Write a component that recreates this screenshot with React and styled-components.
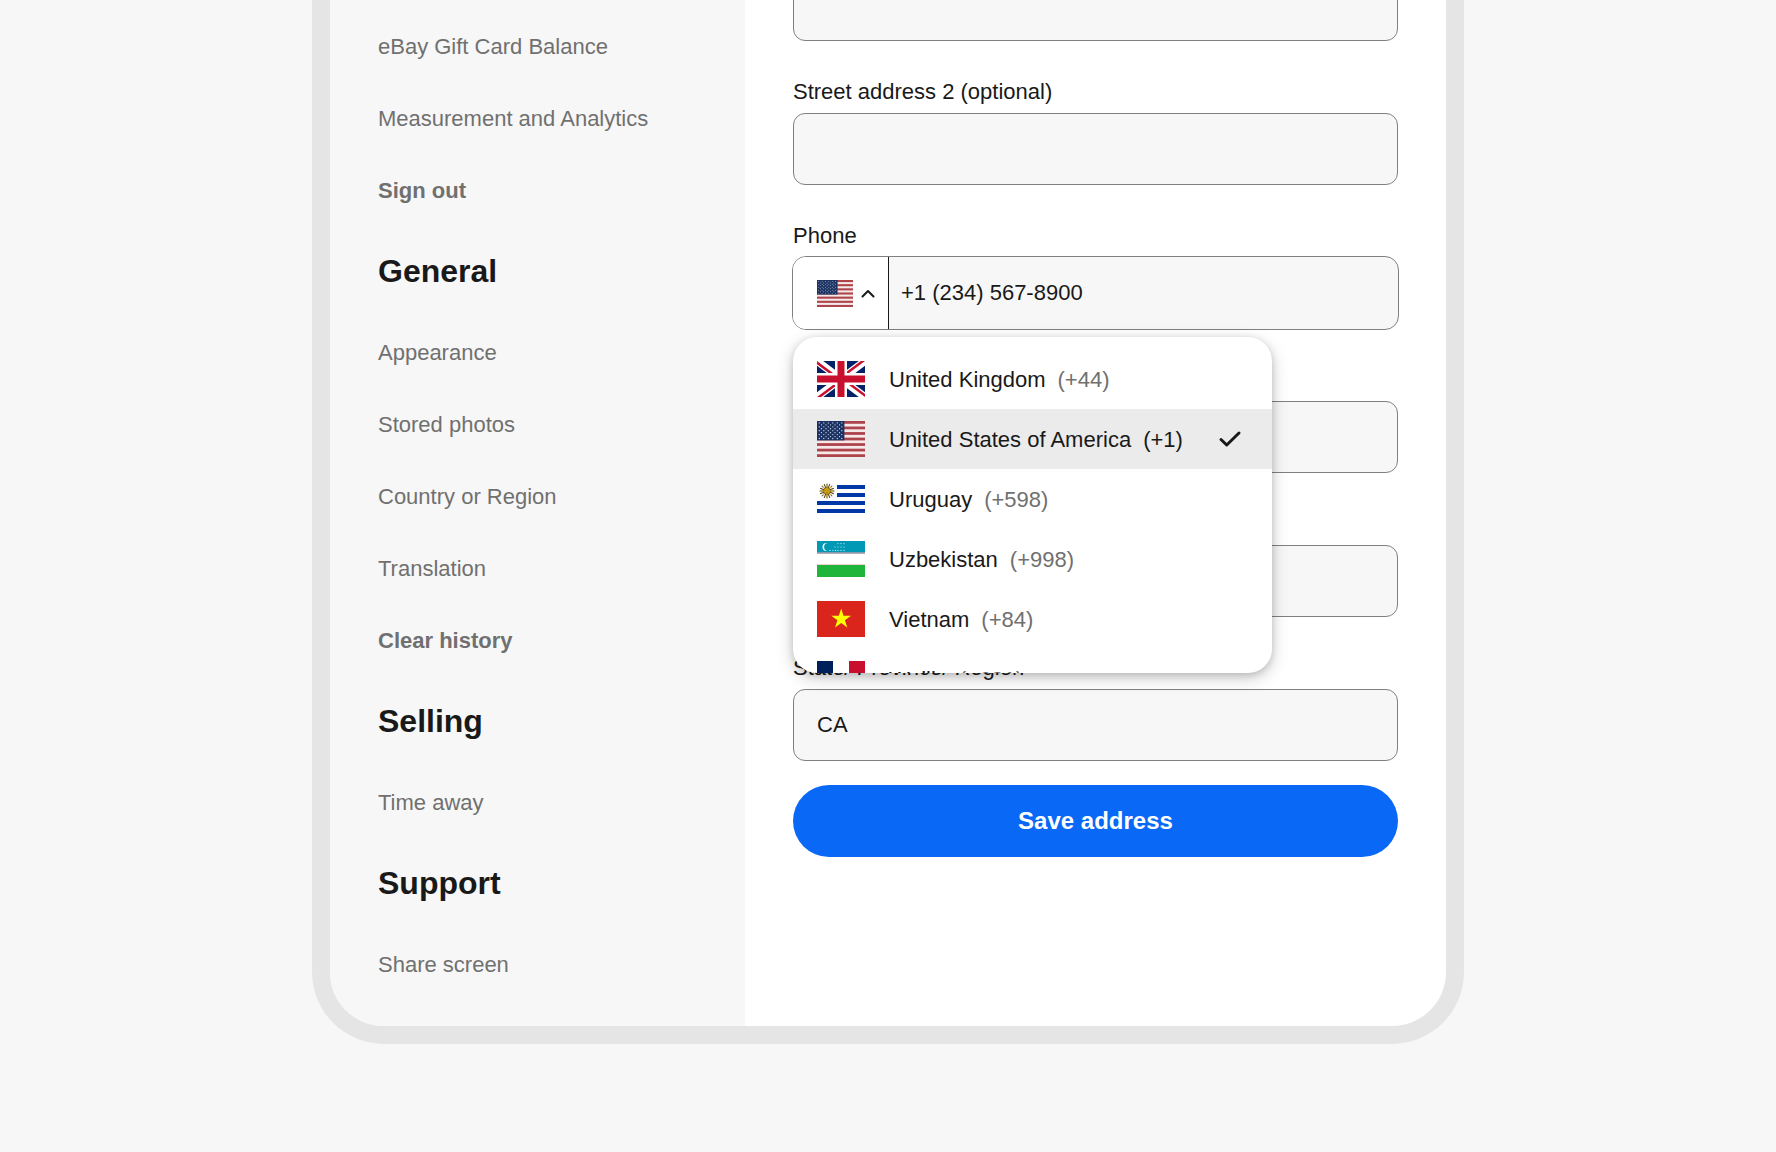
import React, { useState } from 'react'
import styled, { createGlobalStyle } from 'styled-components'

const sections = [
  {
    items: [
      { label: 'eBay Gift Card Balance' },
      { label: 'Measurement and Analytics' },
      { label: 'Sign out', strong: true },
    ],
  },
  {
    title: 'General',
    items: [
      { label: 'Appearance' },
      { label: 'Stored photos' },
      { label: 'Country or Region' },
      { label: 'Translation' },
      { label: 'Clear history', strong: true },
    ],
  },
  { title: 'Selling', items: [{ label: 'Time away' }] },
  { title: 'Support', items: [{ label: 'Share screen' }] },
]

const FlagUK = () => (
  <>
    <clipPath id="uk-halves">
      <path d="M24,18 h24 v18 z v18 h-24 z h-24 v-18 z v-18 h24 z" />
    </clipPath>
    <rect width="48" height="36" fill="#012169" />
    <path d="M0,0 L48,36 M48,0 L0,36" stroke="#fff" strokeWidth="7.5" />
    <path d="M0,0 L48,36 M48,0 L0,36" clipPath="url(#uk-halves)" stroke="#c8102e" strokeWidth="5" />
    <path d="M24,0 V36 M0,18 H48" stroke="#fff" strokeWidth="12" />
    <path d="M24,0 V36 M0,18 H48" stroke="#c8102e" strokeWidth="7" />
  </>
)

const FlagUS = () => {
  const stripe = 36 / 13
  const stars = []
  for (let row = 0; row < 9; row++) {
    const count = row % 2 ? 5 : 6
    for (let col = 0; col < count; col++) {
      stars.push(
        <circle
          key={`${row}-${col}`}
          cx={(row % 2 ? 4.5 : 2.3) + col * 4.5}
          cy={1.9 + row * 1.95}
          r="0.65"
        />
      )
    }
  }
  return (
    <>
      <rect width="48" height="36" fill="#f6e9e9" />
      {[0, 2, 4, 6, 8, 10, 12].map((n) => (
        <rect key={n} y={n * stripe} width="48" height={stripe} fill="#ad444b" />
      ))}
      <rect width="27.4" height={stripe * 7} fill="#1b3263" />
      <g fill="#d5dae6">{stars}</g>
    </>
  )
}

const FlagUruguay = () => (
  <>
    <rect width="48" height="36" fill="#fff" />
    <path d="M20,6 H48 M20,14 H48 M0,22 H48 M0,30 H48" stroke="#0038a8" strokeWidth="4" />
    <g stroke="#4d3d12" strokeWidth="1">
      {Array.from({ length: 16 }, (_, i) => (
        <path key={i} d="M10,10 V2.6" transform={`rotate(${i * 22.5} 10 10)`} />
      ))}
    </g>
    <g stroke="#dcae12" strokeWidth="0.9">
      {Array.from({ length: 8 }, (_, i) => (
        <path key={i} d="M10,10 V4" transform={`rotate(${i * 45} 10 10)`} />
      ))}
    </g>
    <circle cx="10" cy="10" r="3.3" fill="#d6a80f" stroke="#6b5414" strokeWidth="0.6" />
    <path d="M8.6,9.2 h0.9 M10.6,9.2 h0.9 M9,11.3 h2" stroke="#6b5414" strokeWidth="0.6" />
  </>
)

const uzbekStars = [
  [21, 2.6], [24, 2.6], [27, 2.6],
  [18, 6], [21, 6], [24, 6], [27, 6],
  [13, 9.4], [16, 9.4], [18.6, 9.4], [21, 9.4], [24, 9.4], [27, 9.4],
]

const FlagUzbekistan = () => (
  <>
    <rect width="48" height="36" fill="#fff" />
    <rect width="48" height="11.4" fill="#0099b5" />
    <rect y="11.4" width="48" height="1.2" fill="#77768a" />
    <rect y="23.6" width="48" height="0.8" fill="#d98a80" />
    <rect y="24" width="48" height="12" fill="#1eb53a" />
    <circle cx="9.6" cy="6" r="4.1" fill="#fff" />
    <circle cx="11.2" cy="6" r="4.1" fill="#0099b5" />
    <g fill="#d4eef3">
      {uzbekStars.map(([x, y]) => (
        <circle key={`${x}-${y}`} cx={x} cy={y} r="0.6" />
      ))}
    </g>
  </>
)

const FlagVietnam = () => (
  <>
    <rect width="48" height="36" fill="#da251d" />
    <path
      fill="#ff0"
      d="M24.2,7.6 L26.5,14.8 H34 L27.9,19.2 L30.3,26.6 L24.2,22 L18,26.6 L20.4,19.2 L14.3,14.8 H21.8 Z"
    />
  </>
)

const FlagFrance = () => (
  <>
    <rect width="48" height="36" fill="#fff" />
    <rect width="16" height="36" fill="#00205b" />
    <rect x="32" width="16" height="36" fill="#c8102e" />
  </>
)

const countries = [
  { id: 'gb', name: 'United Kingdom', code: '(+44)', flag: FlagUK },
  { id: 'us', name: 'United States of America', code: '(+1)', flag: FlagUS },
  { id: 'uy', name: 'Uruguay', code: '(+598)', flag: FlagUruguay },
  { id: 'uz', name: 'Uzbekistan', code: '(+998)', flag: FlagUzbekistan },
  { id: 'vn', name: 'Vietnam', code: '(+84)', flag: FlagVietnam },
  { id: 'wf', name: 'Wallis', code: '(+681)', flag: FlagFrance },
]

const Flag = ({ drawing: Drawing, small }) => (
  <FlagSvg viewBox="0 0 48 36" $small={small} aria-hidden="true">
    <Drawing />
  </FlagSvg>
)

const PhoneField = () => {
  const [open, setOpen] = useState(true)
  const [selected, setSelected] = useState('us')
  const current = countries.find((c) => c.id === selected)

  const pick = (id) => {
    setSelected(id)
    setOpen(false)
  }

  return (
    <Field>
      <Label htmlFor="phone">Phone</Label>
      <PhoneBox>
        <CountryButton
          type="button"
          aria-label={`Country code, ${current.name}`}
          aria-haspopup="listbox"
          aria-expanded={open}
          onClick={() => setOpen(!open)}
        >
          <Flag drawing={current.flag} small />
          <Chevron viewBox="0 0 14 9" $open={open} aria-hidden="true">
            <path d="M1.5,7.5 L7,2 L12.5,7.5" />
          </Chevron>
        </CountryButton>
        <PhoneInput id="phone" type="tel" defaultValue="+1 (234) 567-8900" />
        {open && (
          <Menu role="listbox" aria-label="Country code">
            {countries.map((country) => (
              <Option
                key={country.id}
                type="button"
                role="option"
                aria-selected={country.id === selected}
                $selected={country.id === selected}
                onClick={() => pick(country.id)}
              >
                <Flag drawing={country.flag} />
                <OptionText>
                  {country.name}
                  <Code $selected={country.id === selected}>{country.code}</Code>
                </OptionText>
                {country.id === selected && (
                  <Check viewBox="0 0 24 18" aria-hidden="true">
                    <path d="M3,9.5 L8.7,15 L21,3" />
                  </Check>
                )}
              </Option>
            ))}
          </Menu>
        )}
      </PhoneBox>
    </Field>
  )
}

const TextField = ({ id, label, value = '' }) => (
  <Field>
    <Label htmlFor={id}>{label}</Label>
    <Input id={id} type="text" defaultValue={value} />
  </Field>
)

const App = () => {
  return (
    <>
      <GlobalStyle />
      <Page>
        <Frame>
          <Sidebar>
            {sections.map((section, index) => (
              <React.Fragment key={index}>
                {section.title && <SectionTitle>{section.title}</SectionTitle>}
                {section.items.map((item) => (
                  <NavLink key={item.label} href="#" $strong={item.strong}>
                    {item.label}
                  </NavLink>
                ))}
              </React.Fragment>
            ))}
          </Sidebar>
          <Main>
            <Form onSubmit={(e) => e.preventDefault()}>
              <Input id="street1" type="text" aria-label="Street address" />
              <TextField id="street2" label="Street address 2 (optional)" />
              <PhoneField />
              <TextField id="zip" label="ZIP code" />
              <TextField id="city" label="City" />
              <TextField id="state" label="State/ Province/ Region" value="CA" />
              <SaveButton type="submit">Save address</SaveButton>
            </Form>
          </Main>
        </Frame>
      </Page>
    </>
  )
}

const GlobalStyle = createGlobalStyle`
  * {
    box-sizing: border-box;
  }
  body {
    margin: 0;
    background-color: #f7f7f7;
    color: #191919;
    font-family: "Liberation Sans", Arial, sans-serif;
    font-size: 22px;
    line-height: 28px;
  }
  button, input {
    font: inherit;
    color: inherit;
  }
`;

const Page = styled.div`
  min-height: 100vh;
  padding: 0 24px 108px;
`;

const Frame = styled.div`
  display: flex;
  max-width: 1152px;
  margin: 0 auto;
  border: 18px solid #e5e5e5;
  border-top: none;
  border-radius: 0 0 72px 72px;
  background-color: #ffffff;
  overflow: hidden;
`;

const Sidebar = styled.nav`
  display: flex;
  flex-direction: column;
  flex: 0 0 415px;
  padding: 11px 48px 25px;
  background-color: #f7f7f7;
`;

const SectionTitle = styled.h2`
  margin: 0;
  padding: 24px 0 26px;
  font-size: 32px;
  line-height: 40px;
  font-weight: 700;
`;

const NavLink = styled.a`
  padding: 22px 0;
  color: #707070;
  font-weight: ${({ $strong }) => ($strong ? 700 : 400)};
  text-decoration: none;
`;

const Main = styled.main`
  flex: 1;
  min-width: 0;
  padding: 0 48px;
`;

/* the form is scrolled, its first box is cut by the top edge */
const Form = styled.form`
  display: flex;
  flex-direction: column;
  margin-top: -31px;
`;

const Field = styled.div`
  display: flex;
  flex-direction: column;
  gap: 7px;
  padding-top: 37px;
`;

const Label = styled.label`
  align-self: flex-start;
`;

const Input = styled.input`
  width: 100%;
  height: 72px;
  padding: 0 23px;
  border: 1px solid #808080;
  border-radius: 12px;
  background-color: #f7f7f7;
  outline: none;
`;

const PhoneBox = styled.div`
  position: relative;
  display: flex;
  height: 74px;
  margin: -1px;
  border: 1px solid #808080;
  border-radius: 14px;
  background-color: #f7f7f7;
`;

const CountryButton = styled.button`
  display: flex;
  align-items: center;
  gap: 8px;
  width: 96px;
  padding: 0 0 0 24px;
  border: none;
  border-right: 1px solid #191919;
  border-radius: 13px 0 0 13px;
  background-color: #ffffff;
  cursor: pointer;
`;

const PhoneInput = styled.input`
  flex: 1;
  min-width: 0;
  padding: 0 12px;
  border: none;
  border-radius: 0 13px 13px 0;
  background-color: transparent;
  outline: none;
`;

const FlagSvg = styled.svg`
  flex: none;
  width: ${({ $small }) => ($small ? '36px' : '48px')};
  height: ${({ $small }) => ($small ? '27px' : '36px')};
`;

const Chevron = styled.svg`
  width: 14px;
  height: 9px;
  fill: none;
  stroke: #191919;
  stroke-width: 2;
  stroke-linecap: round;
  stroke-linejoin: round;
  transform: ${({ $open }) => ($open ? 'none' : 'rotate(180deg)')};
`;

const Menu = styled.div`
  position: absolute;
  z-index: 2;
  top: calc(100% + 8px);
  left: 0;
  width: 479px;
  max-width: 100%;
  height: 336px;
  padding-top: 12px;
  border-radius: 24px;
  background-color: #ffffff;
  box-shadow: 0 2px 7px rgba(0, 0, 0, 0.15), 0 5px 17px rgba(0, 0, 0, 0.2);
  overflow: hidden;
`;

const Option = styled.button`
  display: flex;
  align-items: center;
  gap: 24px;
  width: 100%;
  height: 60px;
  padding: 0 30px 0 24px;
  border: none;
  background-color: ${({ $selected }) => ($selected ? '#ebebeb' : 'transparent')};
  text-align: left;
  cursor: pointer;
`;

const OptionText = styled.span`
  display: flex;
  flex: 1;
  gap: 12px;
  padding-top: 2px;
  white-space: nowrap;
`;

const Code = styled.span`
  color: ${({ $selected }) => ($selected ? '#191919' : '#707070')};
`;

const Check = styled.svg`
  width: 24px;
  height: 18px;
  fill: none;
  stroke: #191919;
  stroke-width: 3;
  stroke-linecap: round;
  stroke-linejoin: round;
`;

const SaveButton = styled.button`
  height: 72px;
  margin-top: 24px;
  border: none;
  border-radius: 36px;
  background-color: #0968f6;
  color: #ffffff;
  font-size: 24px;
  font-weight: 700;
  cursor: pointer;
`;

export default App
